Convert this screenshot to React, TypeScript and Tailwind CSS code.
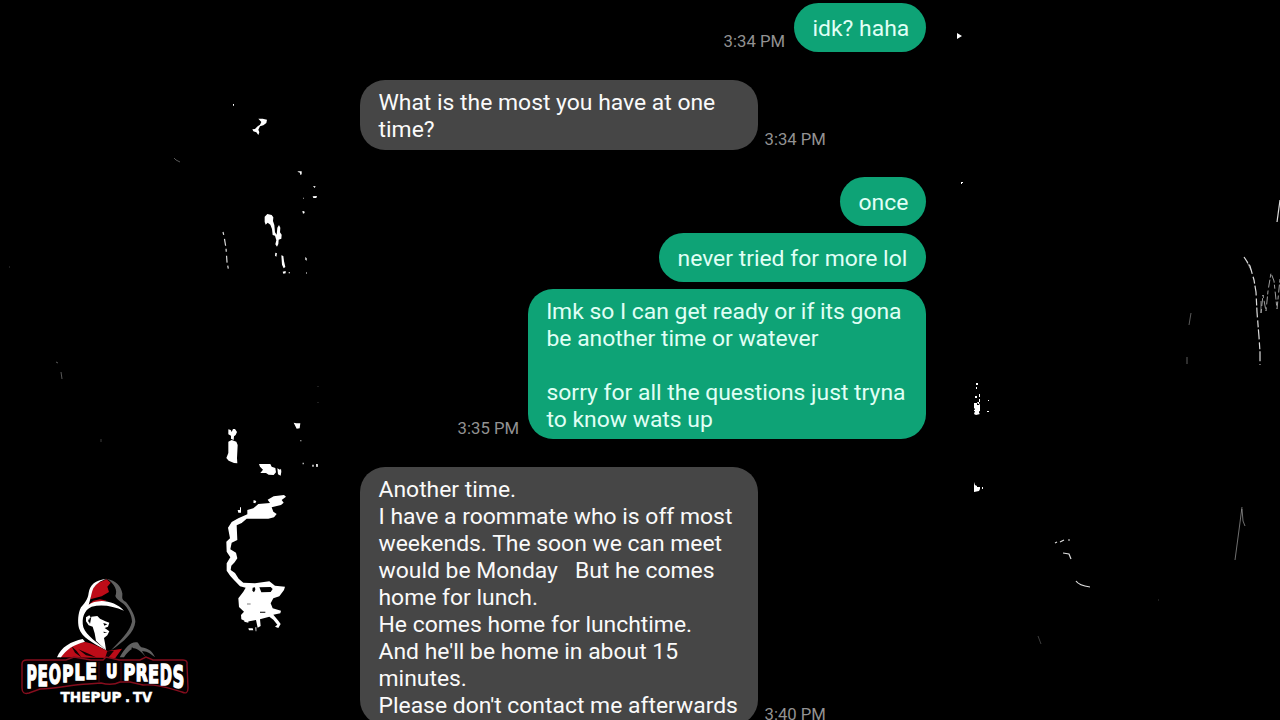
import type { ReactNode } from "react";

type MessageProps = {
  side: "in" | "out";
  time?: string;
  className?: string;
  bubble?: string;
  children: ReactNode;
};

function Message({ side, time, className = "", bubble = "", children }: MessageProps) {
  const out = side === "out";
  return (
    <div className={`flex shrink-0 items-end ${out ? "flex-row-reverse" : ""} ${className}`}>
      <div
        className={`shrink-0 whitespace-pre rounded-[25px] pl-[18.5px] text-[22.9px] leading-[27px] ${
          out ? "bg-[#0ea376] text-[#e0fff5]" : "bg-[#464646] text-[#fafafa]"
        } ${bubble}`}
      >
        {children}
      </div>
      {time && (
        <span
          className={`whitespace-nowrap text-[16.7px] leading-5 text-[#929292] ${
            out ? "mr-[9px]" : "ml-[6.5px]"
          }`}
        >
          {time}
        </span>
      )}
    </div>
  );
}

const LETTERS: [string, number, number, number][] = [
  ["P", 26.6, 10.4, 688.5],
  ["E", 37.4, 10.4, 686.5],
  ["O", 48.7, 12.2, 684.5],
  ["P", 62.2, 11.2, 682.5],
  ["L", 74.4, 10, 681],
  ["E", 85.6, 11.4, 680],
  ["U", 105.9, 11.4, 679],
  ["P", 123.4, 11.6, 680.5],
  ["R", 135.8, 11.8, 681.5],
  ["E", 148, 11, 683.5],
  ["D", 159.7, 12.2, 686],
  ["S", 172.5, 11.8, 688.5],
];

function Logo() {
  return (
    <svg className="absolute left-0 top-[560px]" width="210" height="160" viewBox="0 560 210 160">
      <g transform="translate(10 570) scale(.33333)">
        <path d="M290 28 L302 38 L292 50 L297 66 L275 79 L241 88 L246 58 L262 40Z M231 108 L250 92 L270 88 L290 92 L270 98Z" fill="#bd0c18" />
        <path d="M290 26 C255 30 240 45 236 68 C234 90 222 100 213 112 C204 130 202 155 207 175 C216 202 245 218 291 242 C262 218 230 198 220 172 C214 145 222 120 245 110 C275 102 310 108 342 122 C325 103 300 94 275 93 C258 94 245 97 236 104 C243 85 245 65 250 55 C260 40 272 32 290 26Z" fill="#fff" />
        <path d="M290 26 C318 32 333 48 337 70 C338 82 332 88 348 96 C364 116 376 138 376 155 C374 186 340 216 303 241 C330 212 359 186 366 155 C366 135 352 111 340 101 C328 93 318 86 316 78 C324 62 314 40 290 26Z" fill="#606060" />
        <path d="M228 142 L238 136 L242 142 L236 152 L240 162 L244 140 L262 138 L270 146 L286 154 L298 158 L294 170 L284 174 L298 184 L292 196 L282 204 L285 220 L288 240 L272 226 L258 212 L254 190 L248 170 L236 166 L228 154Z" fill="#fff" />
        <path d="M240 145 L236 153 L239 160 L234 153 L237 146Z M280 159 L292 163 L283 167Z M280 185 L292 187 L282 189Z" fill="#000" />
        <path d="M150 262 C165 235 190 218 226 216 C250 220 275 235 293 243 L336 236 L316 264Z" fill="#bd0c18" />
        <path d="M184 228 L200 243 L214 262 L195 248Z M205 238 L236 251 L258 262 L228 256Z M292 244 L312 242 L296 262 L286 262Z" fill="#120204" />
        <path d="M141 262 C153 231 184 214 218 207 L225 215 C190 224 168 239 153 262Z" fill="#fff" />
        <path d="M329 262 C346 231 364 213 382 217 C388 221 387 228 394 232 C416 234 429 247 435 262 C421 250 410 242 396 244 L408 262 C394 246 382 235 372 235 C360 238 350 250 342 262Z" fill="#606060" />
        <path d="M365 233 L382 248 L374 262" fill="none" stroke="#000" strokeWidth="4" />
      </g>
      <path d="M27 660 L66 660 L74 657 L91 660 L103 660 L106 657 L119 660 L140 660 L146 657 L153 660 L183 660 Q188 660 187 665 L188 688 Q188 695 182 692 C168 688 157 684 143 685 L130 682 L120 682 Q112 686 101 683 L88 684 C70 685 59 688 40 689 L29 693 Q22 695 22 688 L22 664 Q22 660 27 660Z" fill="#050001" stroke="#850d1d" strokeWidth="1.4" />
      <path d="M99 662 V682 M121 662 V681" stroke="#5c0914" strokeWidth="0.8" />
      <g fill="#fff" stroke="#fff" strokeWidth="1.5" fontFamily="'DejaVu Sans', sans-serif" fontWeight="700">
        {LETTERS.map(([ch, x, w, bottom], i) => (
          <text key={i} x={x} y={bottom - 0.6} fontSize={(bottom - 665.2) / 0.729} textLength={w} lengthAdjust="spacingAndGlyphs">
            {ch}
          </text>
        ))}
      </g>
      <g fill="#fff" stroke="#fff" strokeWidth="0.5" fontFamily="'DejaVu Sans', sans-serif" fontWeight="700" fontSize="14.5">
        <text x="60.5" y="701.5" textLength="61" lengthAdjust="spacingAndGlyphs">THEPUP</text>
        <text x="125" y="701.5" textLength="5" lengthAdjust="spacingAndGlyphs">.</text>
        <text x="133" y="701.5" textLength="19" lengthAdjust="spacingAndGlyphs">TV</text>
      </g>
    </svg>
  );
}

function Splatter() {
  return (
    <svg className="absolute inset-0" width="1280" height="720" viewBox="0 0 1280 720">
      <g fill="#fff" transform="translate(210 490) scale(.33333)">
        <path d="M222 15 L228 20 L215 30 L221 38 L213 45 L185 52 L190 65 L200 72 L192 82 L175 86 L110 86 L95 99 L80 106 L82 150 L65 158 L61 178 L78 188 L82 205 L74 217 L64 227 L62 240 L75 249 L86 266 L100 278 L135 280 L178 274 L195 287 L225 290 L222 300 L208 319 L190 325 L182 340 L188 355 L213 362 L211 370 L190 374 L205 392 L212 402 L205 414 L195 410 L202 404 L190 389 L178 380 L150 388 L152 408 L143 413 L138 390 L110 395 L94 388 L93 375 L102 365 L87 351 L85 325 L100 305 L107 293 L90 289 L72 270 L61 258 L50 242 L50 220 L61 202 L50 185 L49 155 L60 145 L54 113 L65 96 L85 85 L112 73 L112 60 L130 55 L145 42 L180 39 L173 29 L191 19Z" />
        <path d="M83 60 h7 v-8 h3 v16 h-8Z M93 85 h3 v14 h-3Z M131 30 l8 3 -3 7 -6 -2Z M115 415 h13 l2 6 h-13Z M136 412 h3 v12 h-2Z M103 390 l12 3 v5 l-12 -3Z" />
        <path d="M148 292 L182 291 L188 297 L182 306 L154 307Z M128 293 l7 -1 1 7 -4 8 -5 -5Z M111 341 h11 v2 h-11Z M150 365 h16 v3 h-16Z" fill="#000" />
      </g>
      <g fill="#fff" transform="translate(210 410) scale(.33333)">
        <path d="M55 58 l7 2 3 6 4 -9 6 0 6 9 -4 9 -5 4 -1 11 -8 -4 0 -9 -8 -4Z M55 95 l10 -5 14 5 4 10 -2 39 1 16 -10 -1 -16 -7 -7 -8 6 -15Z" />
        <path d="M251 38 l8 2 12 0 -2 15 -9 1Z M147 162 l34 0 4 8 11 4 2 13 -7 8 -15 -1 -8 -5 -17 0 8 -10 -9 -9Z M202 175 l8 4 3 -3 1 9 -2 12 -8 -4Z M278 158 h3 v5 h-3Z M307 164 h4 v6 h-4Z M318 162 l6 1 -1 8 -4 0Z M271 91 h3 v3 h-3Z" />
      </g>
      <g fill="#fff" transform="translate(160 90) scale(.33333)">
        <path d="M295 86 l13 0 13 3 -2 10 -9 7 -10 3 -5 10 3 8 -3 8 -6 -8 -9 -3 -3 -6 8 -1 8 -8 7 -5 4 -8Z" />
        <path d="M314 380 l8 -8 13 3 5 7 -1 11 4 12 2 22 5 7 2 -21 5 -8 4 8 -1 14 5 7 -1 12 -8 3 -1 13 -4 8 -5 -7 3 -12 -4 -14 -7 -2 -2 -18 -5 -13 -8 -6 -6 6 -3 -8Z" />
        <path d="M346 488 l5 2 -2 10 -4 -3Z M364 496 l6 2 2 15 4 18 -5 4 -5 -11Z M368 545 l9 -2 0 7 -7 1Z M386 547 h4 v3 h-4Z M436 501 l4 4 0 7 -4 -3Z M438 547 h2 v4 h-2Z M459 288 l8 1 -3 5Z M458 319 l13 -1 -2 6 -9 0Z M427 363 l6 1 1 5 -5 2Z M430 323 h2 v3 h-2Z M416 244 l9 0 0 9 -4 2 -1 -7 -8 -3Z M219 42 h3 v5 h-3Z" />
      </g>
      <g fill="#fff">
        <path d="M957 33l5 3-5 3Z M961 182h2v1h-1v1h-1Z" />
        <path d="M974 403h3v2h2l1-2v3l-1 7 1 1-4 1-2-1 1-3h-1l1-2-1-1Z M974 410l6-1v2h-6Z M976 383h2v2h-2Z M976 387h1v2h-1Z M979 394h1v3h-1Z M975 396h2v2h-2Z M977 402h2v2h-1Z M979 399h1v3h-1Z M979 406h1v3h-1Z M987 411h2v1h-2Z M988 400h1v1h-1Z" />
        <path d="M974 482l1 3 2 1 0 1 3 0 0 2-1 2-5 1Z M982 487h1v2h-1Z" />
      </g>
      <g fill="none" stroke="#ddd" strokeWidth="1.2">
        <path d="M223 232l1 4 2 12 1 14 2 10" strokeDasharray="3 4 7 3" />
        <path d="M1244 257l6 9 4 14 2 12 1 20 2 25 1 15 0 13" strokeDasharray="7 2 10 3" />
        <path d="M1247 262l4 8M1261 301v12" strokeWidth="1" opacity="0.6" />
        <path d="M1261 313l2-18 3 16 2-20 3-18 3 8 3 28 3-30" strokeWidth="0.9" strokeDasharray="4 3 8 2" opacity="0.8" />
        <path d="M1280 200l-3 22" />
        <path d="M1191 313l-2 12M1187 357v7" strokeWidth="0.7" opacity="0.6" />
        <path d="M1242 507l-3 23-4 30M1242 509l1 12 2 5" strokeWidth="1" opacity="0.5" />
        <path d="M1055 543l2-1M1060 542l4-2M1068 540h2M1063 553l6 1 2 5M1076 581c2 3 7 5 14 6" />
        <path d="M174 158l2 2 4 2M56 362l2 1M61 372l1 7" strokeWidth="0.8" opacity="0.5" />
        <path d="M9 267h1M101 439v3M1038 636l3 8M1158 600h1M318 386v1M318 402v1" strokeWidth="0.8" opacity="0.35" />
      </g>
    </svg>
  );
}

export default function App() {
  return (
    <main className="relative flex h-[720px] w-[1280px] justify-center overflow-hidden bg-black font-['Roboto',sans-serif]">
      <Splatter />
      <section className="relative mr-[-6px] flex w-[566px] flex-col pt-[3px]">
        <Message side="out" time="3:34 PM" bubble="w-[132px] pb-[10px] pt-[12px]">idk? haha</Message>
        <Message side="in" time="3:34 PM" className="mt-[28px]" bubble="w-[398px] pb-[6.5px] pt-[9px]">
          {"What is the most you have at one\ntime?"}
        </Message>
        <Message side="out" className="mt-[27.5px]" bubble="w-[86px] pb-[10px] pt-[12px]">once</Message>
        <Message side="out" className="mt-[7px]" bubble="w-[267px] pb-[10px] pt-[12px]">never tried for more lol</Message>
        <Message side="out" time="3:35 PM" className="mt-[6.5px]" bubble="w-[398px] pb-[6px] pt-[9.5px]">
          {"lmk so I can get ready or if its gona\nbe another time or watever\n\nsorry for all the questions just tryna\nto know wats up"}
        </Message>
        <Message side="in" time="3:40 PM" className="mt-[27.5px]" bubble="w-[398px] pb-[6px] pt-[9.5px]">
          {"Another time.\nI have a roommate who is off most\nweekends. The soon we can meet\nwould be Monday   But he comes\nhome for lunch.\nHe comes home for lunchtime.\nAnd he'll be home in about 15\nminutes.\nPlease don't contact me afterwards"}
        </Message>
      </section>
      <Logo />
    </main>
  );
}
